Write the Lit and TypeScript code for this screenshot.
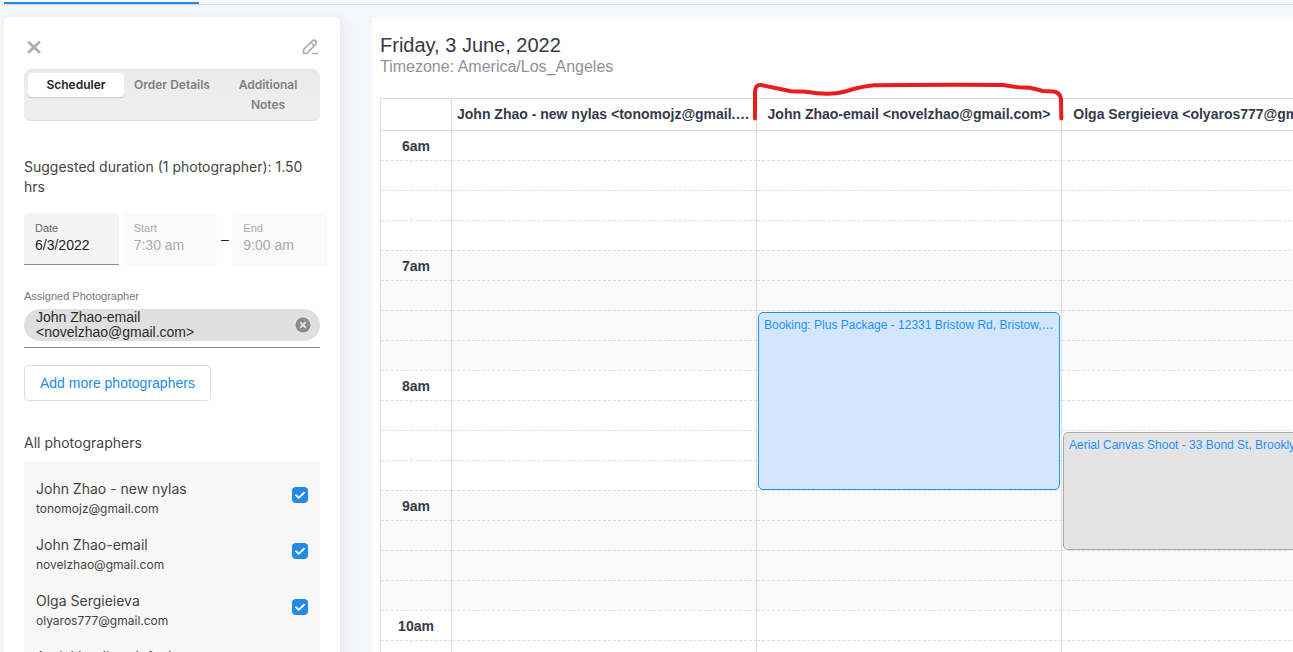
import { LitElement, html, svg, css, nothing } from "lit";
import { customElement, state } from "lit/decorators.js";

interface Photographer { name: string; email: string; checked: boolean; }
interface Booking { column: number; slot: number; length: number; title: string; kind: string; }

const SLOT_HEIGHT = 30;
const HOURS = ["6am", "7am", "8am", "9am", "10am", "11am"];

const COLUMNS = [
  "John Zhao - new nylas <tonomojz@gmail.com>",
  "John Zhao-email <novelzhao@gmail.com>",
  "Olga Sergieieva <olyaros777@gmail.com>",
];

const BOOKINGS: Booking[] = [
  { column: 1, slot: 6, length: 6, title: "Booking: Plus Package - 12331 Bristow Rd, Bristow, VA", kind: "own" },
  { column: 2, slot: 10, length: 4, title: "Aerial Canvas Shoot - 33 Bond St, Brooklyn, NY", kind: "busy" },
];

@customElement("scheduler-panel")
export class SchedulerPanel extends LitElement {
  @state() private people: Photographer[] = [
    { name: "John Zhao - new nylas", email: "tonomojz@gmail.com", checked: true },
    { name: "John Zhao-email", email: "novelzhao@gmail.com", checked: true },
    { name: "Olga Sergieieva", email: "olyaros777@gmail.com", checked: true },
    { name: "Aerial landing default", email: "aerial@gmail.com", checked: true },
  ];

  static styles = css`
    :host { display: block; background: #fff; border-radius: 5px 5px 0 0; padding: 20px 20px 0;
      box-shadow: 4px 4px 14px rgba(40, 50, 90, 0.07); font-family: Inter, sans-serif; color: #444; font-size: 14px; line-height: 20px; }
    * { box-sizing: border-box; }
    button, input { font: inherit; margin: 0; }
    .top { display: flex; justify-content: space-between; align-items: center; height: 20px; }
    .icon { border: 0; background: none; padding: 0; width: 20px; height: 20px; display: flex; color: #b0b0b0; }
    .tabs { display: grid; grid-template-columns: repeat(3, 1fr); align-items: start; margin-top: 12px; padding: 4px;
      height: 52px; border-radius: 7px; background: linear-gradient(#eaeaea, #f0f0f0); border-bottom: 1px solid #d9dbe0; }
    .tab { border: 0; background: none; border-radius: 4px; padding: 2px 8px; font-size: 12px; line-height: 20px; font-weight: 600; color: #808080; }
    .tab.wide { padding: 2px 0; }
    .tab.active { background: #fff; color: #222; box-shadow: 0 1px 1px rgba(0, 0, 0, 0.15); }
    .duration { margin: 36px 0 16px; }
    .fields { display: flex; margin-right: -7px; font-family: "Liberation Sans", Arial, sans-serif; }
    .field { flex: 1; min-width: 0; height: 52px; padding: 8px 10px 0 11px; background: #fafafa; border-radius: 4px 4px 0 0; color: #aaa; }
    .field label { display: block; font-size: 11px; line-height: 14px; }
    .field input { display: block; width: 100%; border: 0; padding: 0; background: none; color: inherit; font-size: 14px; line-height: 20px; height: 20px; }
    .field.live { background: #f4f4f4; color: #1e1e1e; border-bottom: 1px solid #8c8c8c; margin-right: 4px; }
    .field.live label { color: #666; }
    .dash { width: 15px; text-align: center; line-height: 52px; color: #222; }
    .assigned { margin-top: 24px; font-family: "Liberation Sans", Arial, sans-serif; border-bottom: 1px solid #8c8c8c; padding-bottom: 6px; }
    .caption { font-size: 11px; line-height: 14px; color: #777; margin-bottom: 6px; }
    .chip { display: flex; align-items: center; justify-content: space-between; height: 32px; border-radius: 16px; background: #e0e0e0;
      padding: 0 9px 0 12px; color: #2a2a2a; font-size: 14px; line-height: 15px; }
    .remove { border: 0; background: none; padding: 0; width: 16px; height: 16px; display: flex; }
    .add { display: block; margin-top: 17px; height: 36px; padding: 0 15px; border: 1px solid #dcdcdc; border-radius: 4px; background: #fff;
      color: #228be6; font-family: "Liberation Sans", Arial, sans-serif; font-size: 14px; }
    .subtitle { margin: 32px 0 8px; font-size: 14px; line-height: 20px; font-weight: 400; }
    .list { margin: 0; padding: 12px 12px 0; list-style: none; background: #f7f7f7; border-radius: 4px 4px 0 0; }
    .person { display: flex; justify-content: space-between; height: 56px; padding-top: 6px; }
    .person label { display: block; }
    .email { display: block; font-size: 12px; }
    .tick { appearance: none; width: 16px; height: 16px; margin-top: 8px; border-radius: 4px; border: 1px solid #bbb; background: #fff; }
    .tick:checked { border: 0; background: #228be6
      url("data:image/svg+xml,%3Csvg xmlns='http://www.w3.org/2000/svg' viewBox='0 0 16 16'%3E%3Cpath d='M4 8.2l2.7 2.7L12 5.7' fill='none' stroke='white' stroke-width='1.9' stroke-linecap='round' stroke-linejoin='round'/%3E%3C/svg%3E"); }
  `;

  private toggle(i: number) {
    this.people = this.people.map((p, n) => (n === i ? { ...p, checked: !p.checked } : p));
  }

  render() {
    return html`
      <div class="top">
        <button class="icon" aria-label="Close">
          <svg width="20" height="20" viewBox="0 0 20 20" fill="none" stroke="currentColor" stroke-width="3" stroke-linecap="round"><path d="M5 5.5l10 9.5M15 5.5L5 15" /></svg>
        </button>
        <button class="icon" aria-label="Edit">
          <svg width="20" height="20" viewBox="0 0 20 20" fill="none" stroke="currentColor" stroke-width="1.7" stroke-linejoin="round" stroke-linecap="round">
            <path d="M3.500 16.300v-3.600L12.300 3.900a2.200 2.200 0 0 1 3.100 0l.3.300a2.200 2.200 0 0 1 0 3.100L6.900 16.300zM11 5.500l3.300 3.300M12.500 16.500H17.400" />
          </svg>
        </button>
      </div>
      <div class="tabs" role="tablist">
        <button class="tab active" role="tab" aria-selected="true">Scheduler</button>
        <button class="tab wide" role="tab" aria-selected="false">Order Details</button>
        <button class="tab" role="tab" aria-selected="false">Additional Notes</button>
      </div>
      <p class="duration">Suggested duration (1 photographer): 1.50 hrs</p>
      <div class="fields">
        <div class="field live"><label for="date">Date</label><input id="date" .value=${"6/3/2022"} /></div>
        <div class="field"><label for="start">Start</label><input id="start" .value=${"7:30 am"} readonly /></div>
        <span class="dash">–</span>
        <div class="field"><label for="end">End</label><input id="end" .value=${"9:00 am"} readonly /></div>
      </div>
      <div class="assigned">
        <div class="caption">Assigned Photographer</div>
        <div class="chip">
          <span>John Zhao-email<br />&lt;novelzhao@gmail.com&gt;</span>
          <button class="remove" aria-label="Remove photographer">
            <svg width="16" height="16" viewBox="0 0 16 16"><circle cx="8" cy="8" r="7.5" fill="#8c8c8c" /><path d="M5.2 5.2l5.6 5.6M10.8 5.2l-5.6 5.6" stroke="#e6e6e6" stroke-width="1.7" /></svg>
          </button>
        </div>
      </div>
      <button class="add">Add more photographers</button>
      <h2 class="subtitle">All photographers</h2>
      <ul class="list">
        ${this.people.map((p, i) => html`
          <li class="person">
            <label for="person-${i}">${p.name}<span class="email">${p.email}</span></label>
            <input class="tick" type="checkbox" id="person-${i}" .checked=${p.checked} @change=${() => this.toggle(i)} />
          </li>`)}
      </ul>
    `;
  }
}

@customElement("day-calendar")
export class DayCalendar extends LitElement {
  static styles = css`
    :host { display: block; background: #fff; padding: 16px 0 0 8px; overflow: hidden; min-width: 0;
      font-family: "Liberation Sans", Arial, sans-serif; color: #343a4a; }
    * { box-sizing: border-box; }
    .date { margin: 0; font-size: 20px; line-height: 24px; font-weight: 400; }
    .zone { margin: 0 0 21px; font-size: 16px; line-height: 20px; color: #8e9199; }
    .grid { table-layout: fixed; width: 987px; border-collapse: separate; border-spacing: 0; border-left: 1px solid #ddd; border-top: 1px solid #ddd; }
    .times { width: 71px; }
    th, td { position: relative; padding: 0; border-right: 1px solid #ddd; font-size: 14px; font-weight: 700; text-align: center; }
    .head { height: 32px; padding-bottom: 2px; border-bottom: 1px solid #ddd; }
    .who { display: block; padding: 0 5px; overflow: hidden; text-overflow: ellipsis; white-space: nowrap; }
    .slot { height: 30px; border-bottom: 1px dashed #ddd; }
    .shade { background: #fafafa; }
    .booking { position: absolute; z-index: 1; top: 1px; left: 1px; right: 1px; border: 1px solid; border-radius: 5px; padding: 4px 5px;
      font-size: 12px; line-height: 16px; font-weight: 400; text-align: left; color: #1e90ff; white-space: nowrap; overflow: hidden; text-overflow: ellipsis; }
    .own { background: #d2e7ff; border-color: #1e90ff; }
    .busy { background: #e4e4e4; border-color: #aaa; }
    .mark { position: absolute; z-index: 2; left: -5px; top: -19px; pointer-events: none; }
  `;

  private mark() {
    return svg`<svg class="mark" width="314" height="44" viewBox="752 80 314 44" fill="none" stroke="#ea1c1c" stroke-width="4" stroke-linecap="round" stroke-linejoin="round">
      <path d="M755 118.500L755 92Q755 84.500 761 85L791 91.300L806 91.700Q830 96 845 91.500Q863 86 874 85.300Q940 84.500 1003 85L1018 87.300L1030 87.700L1043 91L1053 91.500Q1060 92 1061 99L1061.300 118.500" />
    </svg>`;
  }

  render() {
    return html`
      <h1 class="date">Friday, 3 June, 2022</h1>
      <p class="zone">Timezone: America/Los_Angeles</p>
      <table class="grid">
        <colgroup><col class="times" />${COLUMNS.map(() => html`<col />`)}</colgroup>
        <thead>
          <tr>
            <td class="head"></td>
            ${COLUMNS.map((c, i) => html`<th class="head" scope="col"><span class="who">${c}</span>${i === 1 ? this.mark() : nothing}</th>`)}
          </tr>
        </thead>
        <tbody>
          ${HOURS.flatMap((hour, h) => [0, 1, 2, 3].map((q) => html`
            <tr class=${h % 2 ? "shade" : ""}>
              ${q === 0 ? html`<th class="slot" scope="row">${hour}</th>` : html`<td class="slot"></td>`}
              ${COLUMNS.map((_, c) => html`<td class="slot">${BOOKINGS
                .filter((b) => b.column === c && b.slot === h * 4 + q)
                .map((b) => html`<div class="booking ${b.kind}" style="height:${b.length * SLOT_HEIGHT - 2}px">${b.title}</div>`)}</td>`)}
            </tr>`))}
        </tbody>
      </table>
    `;
  }
}

@customElement("app-root")
export class AppRoot extends LitElement {
  static styles = css`
    :host { display: flex; flex-direction: column; height: 100vh; overflow: hidden; background: #f5f6fb; }
    .nav { flex: none; height: 4px; margin-left: 4px; border-bottom: 1px solid #d6d8df; }
    .current { width: 195px; height: 4px; background: linear-gradient(#f5f6fb 50%, #228be6 50%); }
    .body { flex: 1; min-height: 0; display: grid; grid-template-columns: 336px minmax(0, 1fr); gap: 32px; padding: 12px 0 0 4px; }
  `;
  render() {
    return html`
      <div class="nav"><div class="current"></div></div>
      <main class="body"><scheduler-panel></scheduler-panel><day-calendar></day-calendar></main>
    `;
  }
}
